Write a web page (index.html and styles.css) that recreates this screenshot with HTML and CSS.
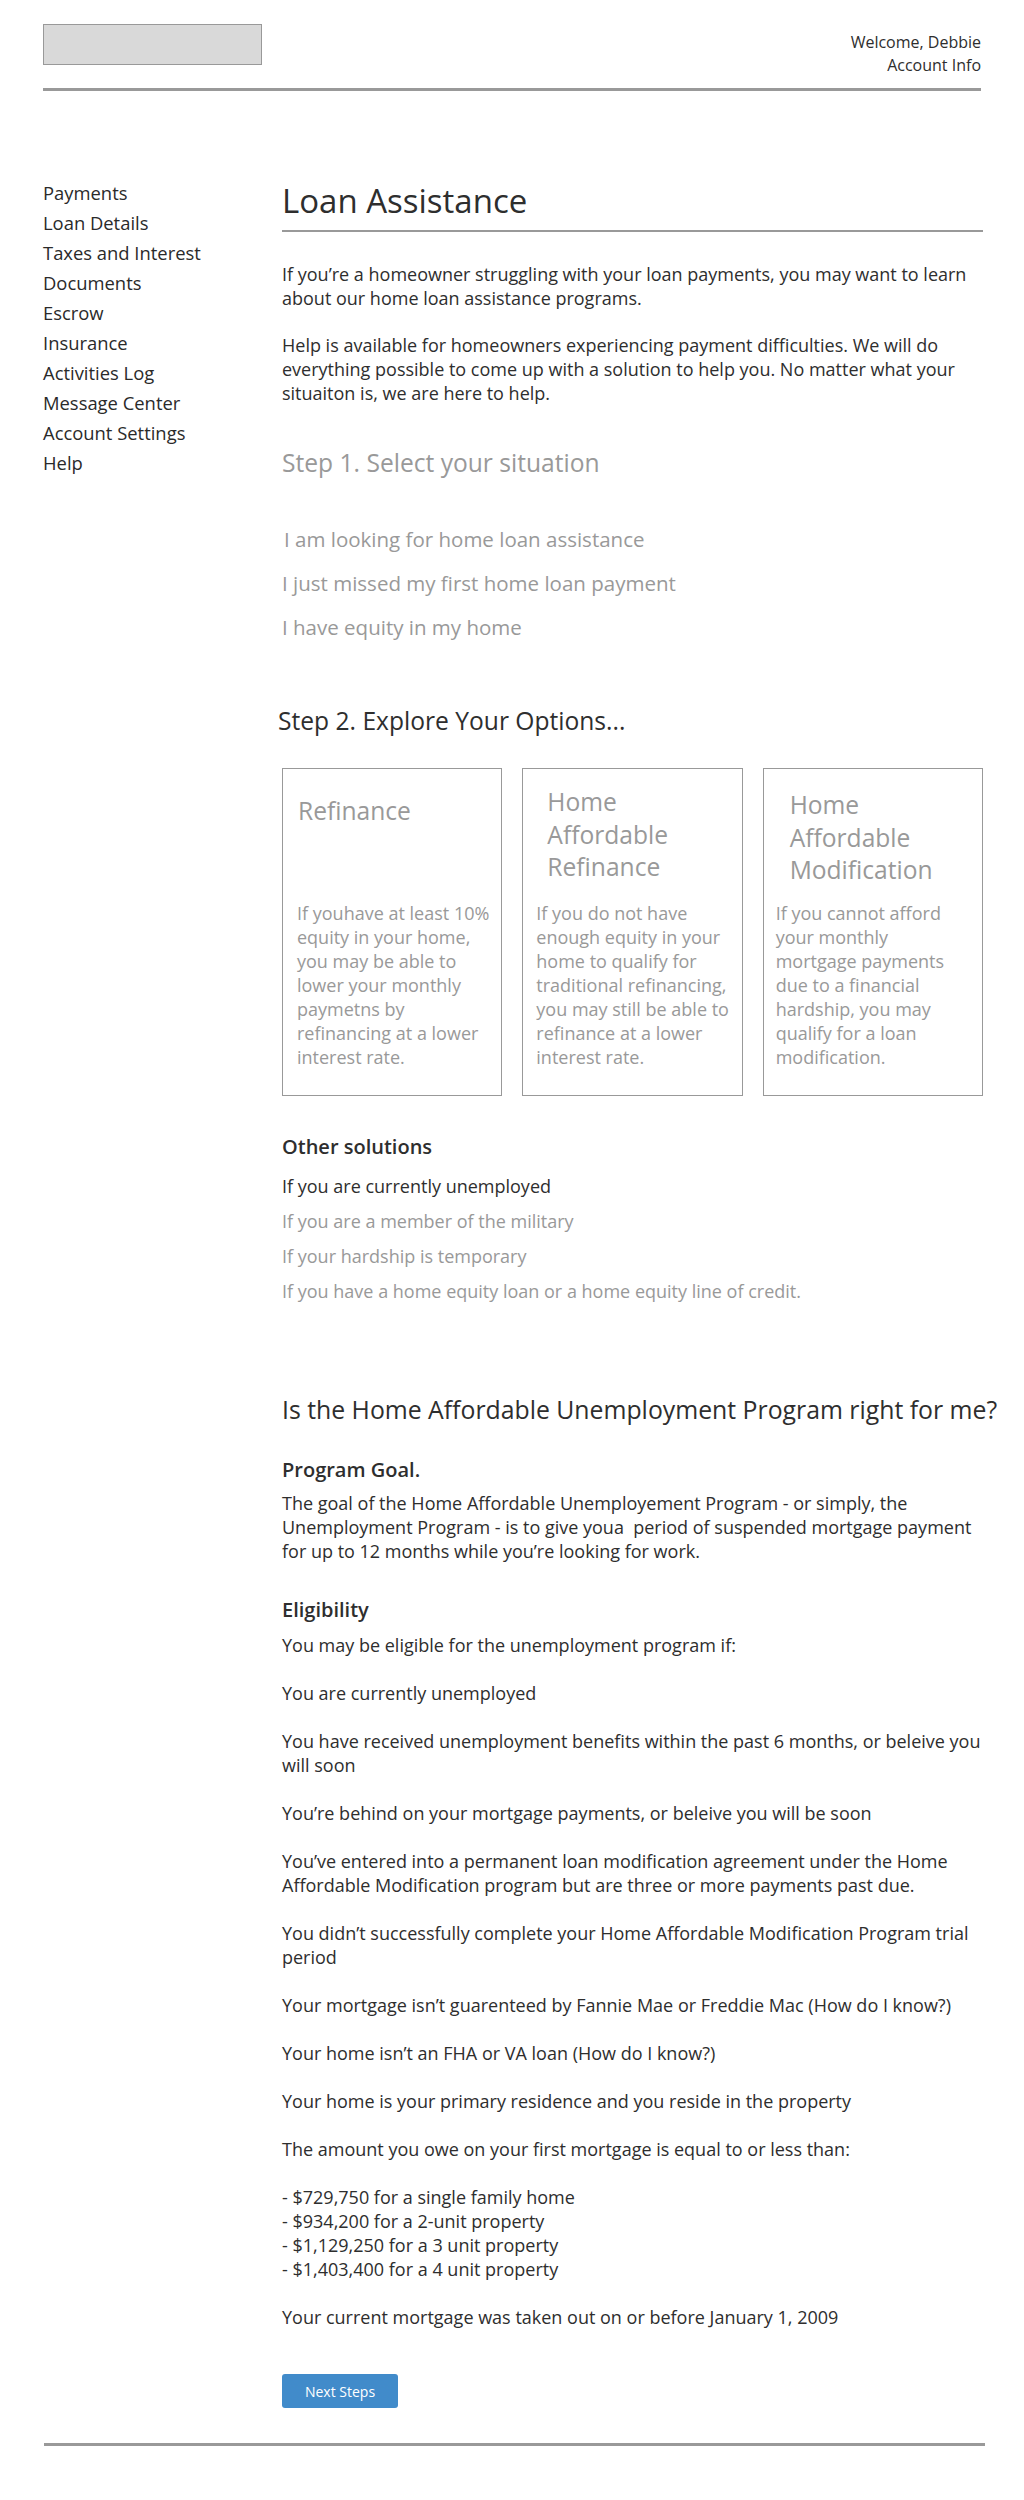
FILE: index.html
```html
<!DOCTYPE html>
<html lang="en">
<head>
<meta charset="utf-8">
<title>Loan Assistance</title>
<link rel="stylesheet" href="styles.css">
</head>
<body>
<div class="page">
  <header class="site-header">
    <div class="logo"></div>
    <div class="user">
      <div>Welcome, Debbie</div>
      <div>Account Info</div>
    </div>
  </header>

  <div class="layout">
    <nav class="sidenav">
      <a>Payments</a>
      <a>Loan Details</a>
      <a>Taxes and Interest</a>
      <a>Documents</a>
      <a>Escrow</a>
      <a>Insurance</a>
      <a>Activities Log</a>
      <a>Message Center</a>
      <a>Account Settings</a>
      <a>Help</a>
    </nav>

    <main class="main">
      <h1 class="page-title">Loan Assistance</h1>
      <p class="intro">If you’re a homeowner struggling with your loan payments, you may want to learn about our home loan assistance programs.</p>
      <p class="intro second">Help is available for homeowners experiencing payment difficulties. We will do everything possible to come up with a solution to help you. No matter what your situaiton is, we are here to help.</p>

      <h2 class="step step-one">Step 1. Select your situation</h2>
      <ul class="situations">
        <li class="first">I am looking for home loan assistance</li>
        <li>I just missed my first home loan payment</li>
        <li>I have equity in my home</li>
      </ul>

      <h2 class="step step-two">Step 2. Explore Your Options...</h2>
      <div class="cards">
        <div class="card">
          <div class="card-head head-1"><h3>Refinance</h3></div>
          <p class="card-body body-1">If youhave at least 10% equity in your home, you may be able to lower your monthly paymetns by refinancing at a lower interest rate.</p>
        </div>
        <div class="card">
          <div class="card-head head-2"><h3>Home<br>Affordable<br>Refinance</h3></div>
          <p class="card-body body-2">If you do not have enough equity in your home to qualify for traditional refinancing, you may still be able to refinance at a lower interest rate.</p>
        </div>
        <div class="card">
          <div class="card-head head-3"><h3>Home<br>Affordable<br>Modification</h3></div>
          <p class="card-body body-3">If you cannot afford your monthly mortgage payments due to a financial hardship, you may qualify for a loan modification.</p>
        </div>
      </div>

      <h4 class="sub other-title">Other solutions</h4>
      <ul class="solutions">
        <li class="active">If you are currently unemployed</li>
        <li>If you are a member of the military</li>
        <li>If your hardship is temporary</li>
        <li>If you have a home equity loan or a home equity line of credit.</li>
      </ul>

      <h2 class="question">Is the Home Affordable Unemployment Program right for me?</h2>

      <h4 class="sub goal-title">Program Goal.</h4>
      <p class="text goal">The goal of the Home Affordable Unemployement Program - or simply, the Unemployment Program - is to give youa&nbsp; period of suspended mortgage payment for up to 12 months while you’re looking for work.</p>

      <h4 class="sub elig-title">Eligibility</h4>
      <div class="eligibility">
        <p>You may be eligible for the unemployment program if:</p>
        <p>You are currently unemployed</p>
        <p>You have received unemployment benefits within the past 6 months, or beleive you will soon</p>
        <p>You’re behind on your mortgage payments, or beleive you will be soon</p>
        <p>You’ve entered into a permanent loan modification agreement under the Home Affordable Modification program but are three or more payments past due.</p>
        <p>You didn’t successfully complete your Home Affordable Modification Program trial period</p>
        <p>Your mortgage isn’t guarenteed by Fannie Mae or Freddie Mac (How do I know?)</p>
        <p>Your home isn’t an FHA or VA loan (How do I know?)</p>
        <p>Your home is your primary residence and you reside in the property</p>
        <p>The amount you owe on your first mortgage is equal to or less than:</p>
        <p>- $729,750 for a single family home<br>- $934,200 for a 2-unit property<br>- $1,129,250 for a 3 unit property<br>- $1,403,400 for a 4 unit property</p>
        <p>Your current mortgage was taken out on or before January 1, 2009</p>
      </div>

      <button class="btn-primary" type="button">Next Steps</button>
    </main>
  </div>

  <footer class="site-footer"></footer>
</div>
</body>
</html>
```

FILE: styles.css
```css
* {
  box-sizing: border-box;
}

html, body {
  margin: 0;
  padding: 0;
  background: #ffffff;
}

body {
  font-family: "Open Sans", "Liberation Sans", Arial, sans-serif;
  color: #2e2e2e;
  font-size: 18px;
  line-height: 24px;
}

.page {
  width: 1024px;
}

/* Header */
.site-header {
  margin: 0 43px;
  padding-top: 24px;
  height: 91px;
  border-bottom: 3px solid #999999;
  display: flex;
  justify-content: space-between;
  align-items: flex-start;
}

.logo {
  width: 219px;
  height: 41px;
  background: #d9d9d9;
  border: 1px solid #999999;
}

.user {
  text-align: right;
  font-size: 16px;
  line-height: 23px;
  color: #2e2e2e;
  padding-top: 7px;
}

/* Layout */
.layout {
  display: grid;
  grid-template-columns: 239px 701px;
  margin-left: 43px;
}

.sidenav {
  display: flex;
  flex-direction: column;
  padding-top: 87px;
}

.sidenav a {
  display: block;
  font-size: 18.4px;
  line-height: 30px;
  color: #2a2a2a;
  text-decoration: none;
}

.main {
  padding-top: 90px;
}

.page-title {
  margin: 0;
  font-size: 33px;
  line-height: 40px;
  font-weight: 400;
  color: #2e2e2e;
  padding-bottom: 9px;
  border-bottom: 2px solid #999999;
}

.intro {
  margin: 30px 0 0;
}

.intro.second {
  margin-top: 23px;
}

.step {
  margin: 0;
  font-size: 24.6px;
  line-height: 30px;
  font-weight: 400;
}

.step-one {
  margin-top: 43px;
  color: #999999;
}

.situations {
  list-style: none;
  margin: 48px 0 0;
  padding: 0;
  display: flex;
  flex-direction: column;
  gap: 18px;
}

.situations li {
  font-size: 20.5px;
  line-height: 26px;
  color: #999999;
}

.situations li.first {
  padding-left: 2px;
}

.step-two {
  margin-top: 66px;
  margin-left: -4px;
  color: #2e2e2e;
}

/* Cards */
.cards {
  margin-top: 32px;
  display: grid;
  grid-template-columns: repeat(3, 1fr);
  gap: 20px;
}

.card {
  height: 328px;
  border: 1px solid #999999;
  display: grid;
  grid-template-rows: 132px auto;
}

.card-head h3 {
  margin: 0;
  font-size: 24.6px;
  line-height: 32.5px;
  font-weight: 400;
  color: #999999;
}

.head-1 { padding: 26px 0 0 15px; }
.head-2 { padding: 17px 0 0 24px; }
.head-3 { padding: 20px 0 0 26px; }

.card-body {
  margin: 0;
  color: #999999;
  font-size: 18px;
  line-height: 24px;
}

.body-1 { padding: 0 6px 0 14px; }
.body-2 { padding: 0 6px 0 13px; }
.body-3 { padding: 0 26px 0 12px; }

/* Other solutions */
.sub {
  margin: 0;
  font-size: 20px;
  line-height: 26px;
  font-weight: 600;
  color: #2e2e2e;
}

.other-title {
  margin-top: 38px;
}

.solutions {
  list-style: none;
  margin: 14px 0 0;
  padding: 0;
  display: flex;
  flex-direction: column;
  gap: 11px;
}

.solutions li {
  color: #999999;
}

.solutions li.active {
  color: #2e2e2e;
}

.question {
  margin: 90px 0 0;
  font-size: 24.8px;
  line-height: 32px;
  font-weight: 400;
  white-space: nowrap;
  color: #2e2e2e;
}

.goal-title {
  margin-top: 32px;
}

.text {
  margin: 0;
}

.goal {
  margin-top: 8px;
}

.elig-title {
  margin-top: 34px;
}

.eligibility {
  margin-top: 10px;
  display: flex;
  flex-direction: column;
  gap: 24px;
}

.eligibility p {
  margin: 0;
}

.btn-primary {
  display: block;
  margin-top: 45px;
  width: 116px;
  height: 34px;
  border: none;
  border-radius: 3px;
  background: #418bca;
  color: #ffffff;
  font-family: "Open Sans", "Liberation Sans", Arial, sans-serif;
  font-size: 14px;
  font-weight: 400;
  padding: 0;
}

.site-footer {
  margin: 35px 39px 0 44px;
  border-top: 3px solid #999999;
  height: 55px;
}
```
